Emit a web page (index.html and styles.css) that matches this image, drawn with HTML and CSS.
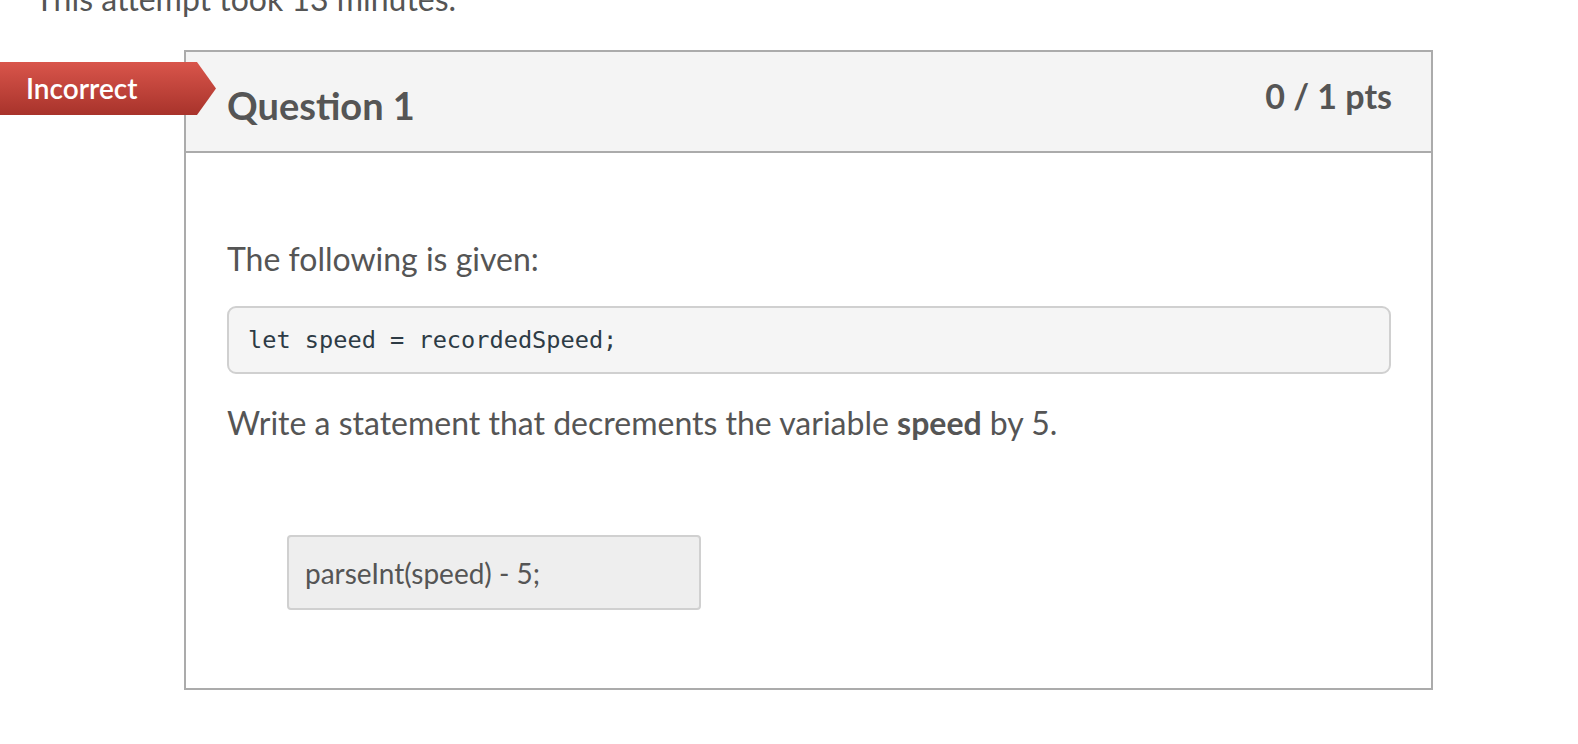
FILE: index.html
```html
<!DOCTYPE html>
<html>
<head>
<meta charset="utf-8">
<link rel="stylesheet" href="styles.css">
</head>
<body>
<div class="page">
  <p class="attempt">This attempt took 13 minutes.</p>
  <div class="question-wrap">
    <div class="badge">Incorrect</div>
    <div class="card">
      <div class="card-header">
        <h2 class="q-title">Question 1</h2>
        <span class="pts">0 / 1 pts</span>
      </div>
      <div class="card-body">
        <p class="text">The following is given:</p>
        <pre class="code">let speed = recordedSpeed;</pre>
        <p class="text">Write a statement that decrements the variable <strong>speed</strong> by 5.</p>
        <div class="answer">parseInt(speed) - 5;</div>
      </div>
    </div>
  </div>
</div>
</body>
</html>
```

FILE: styles.css
```css
html, body {
  margin: 0;
  padding: 0;
  background: #fff;
}
body {
  font-family: Lato, "Open Sans", sans-serif;
  color: #555;
}
.page {
  overflow: hidden;
  height: 744px;
}
.attempt {
  margin: -19px 0 0 35px;
  font-size: 32px;
  line-height: 36px;
  color: #555;
}
.question-wrap {
  position: relative;
  margin-top: 33px;
}
.badge {
  position: absolute;
  left: 0;
  top: 12px;
  width: 216px;
  height: 53px;
  box-sizing: border-box;
  padding-left: 26px;
  line-height: 52px;
  font-size: 28px;
  font-weight: 600;
  color: #fff;
  background: linear-gradient(#d9554b, #a8332b);
  clip-path: polygon(0 0, 197px 0, 216px 50%, 197px 100%, 0 100%);
  z-index: 2;
}
.card {
  margin-left: 184px;
  width: 1249px;
  box-sizing: border-box;
  border: 2px solid #ababab;
}
.card-header {
  background: #f4f4f4;
  border-bottom: 2px solid #ababab;
  height: 99px;
  display: flex;
  justify-content: space-between;
  align-items: flex-start;
  padding: 0 39px 0 41px;
}
.q-title {
  margin: 32px 0 0;
  font-size: 38px;
  font-weight: 700;
  line-height: 42px;
  color: #555;
}
.pts {
  margin-top: 24px;
  font-size: 34px;
  font-weight: 700;
  line-height: 40px;
  color: #555;
}
.card-body {
  padding: 88px 40px 78px 41px;
}
.text {
  margin: 0;
  font-size: 32px;
  line-height: 36px;
}
.text strong {
  font-weight: 700;
}
.code {
  margin: 29px 0 31px;
  height: 68px;
  box-sizing: border-box;
  border: 2px solid #d0d0d0;
  border-radius: 9px;
  background: #f5f5f5;
  padding: 0 19px;
  font-family: "DejaVu Sans Mono", monospace;
  font-size: 23.6px;
  line-height: 64px;
  color: #2d3b45;
}
.answer {
  margin: 94px 0 0 60px;
  width: 414px;
  height: 75px;
  box-sizing: border-box;
  border: 2px solid #d0d0d0;
  border-radius: 4px;
  background: #eeeeee;
  padding-left: 16px;
  font-size: 28px;
  line-height: 73px;
  color: #555;
}
```
